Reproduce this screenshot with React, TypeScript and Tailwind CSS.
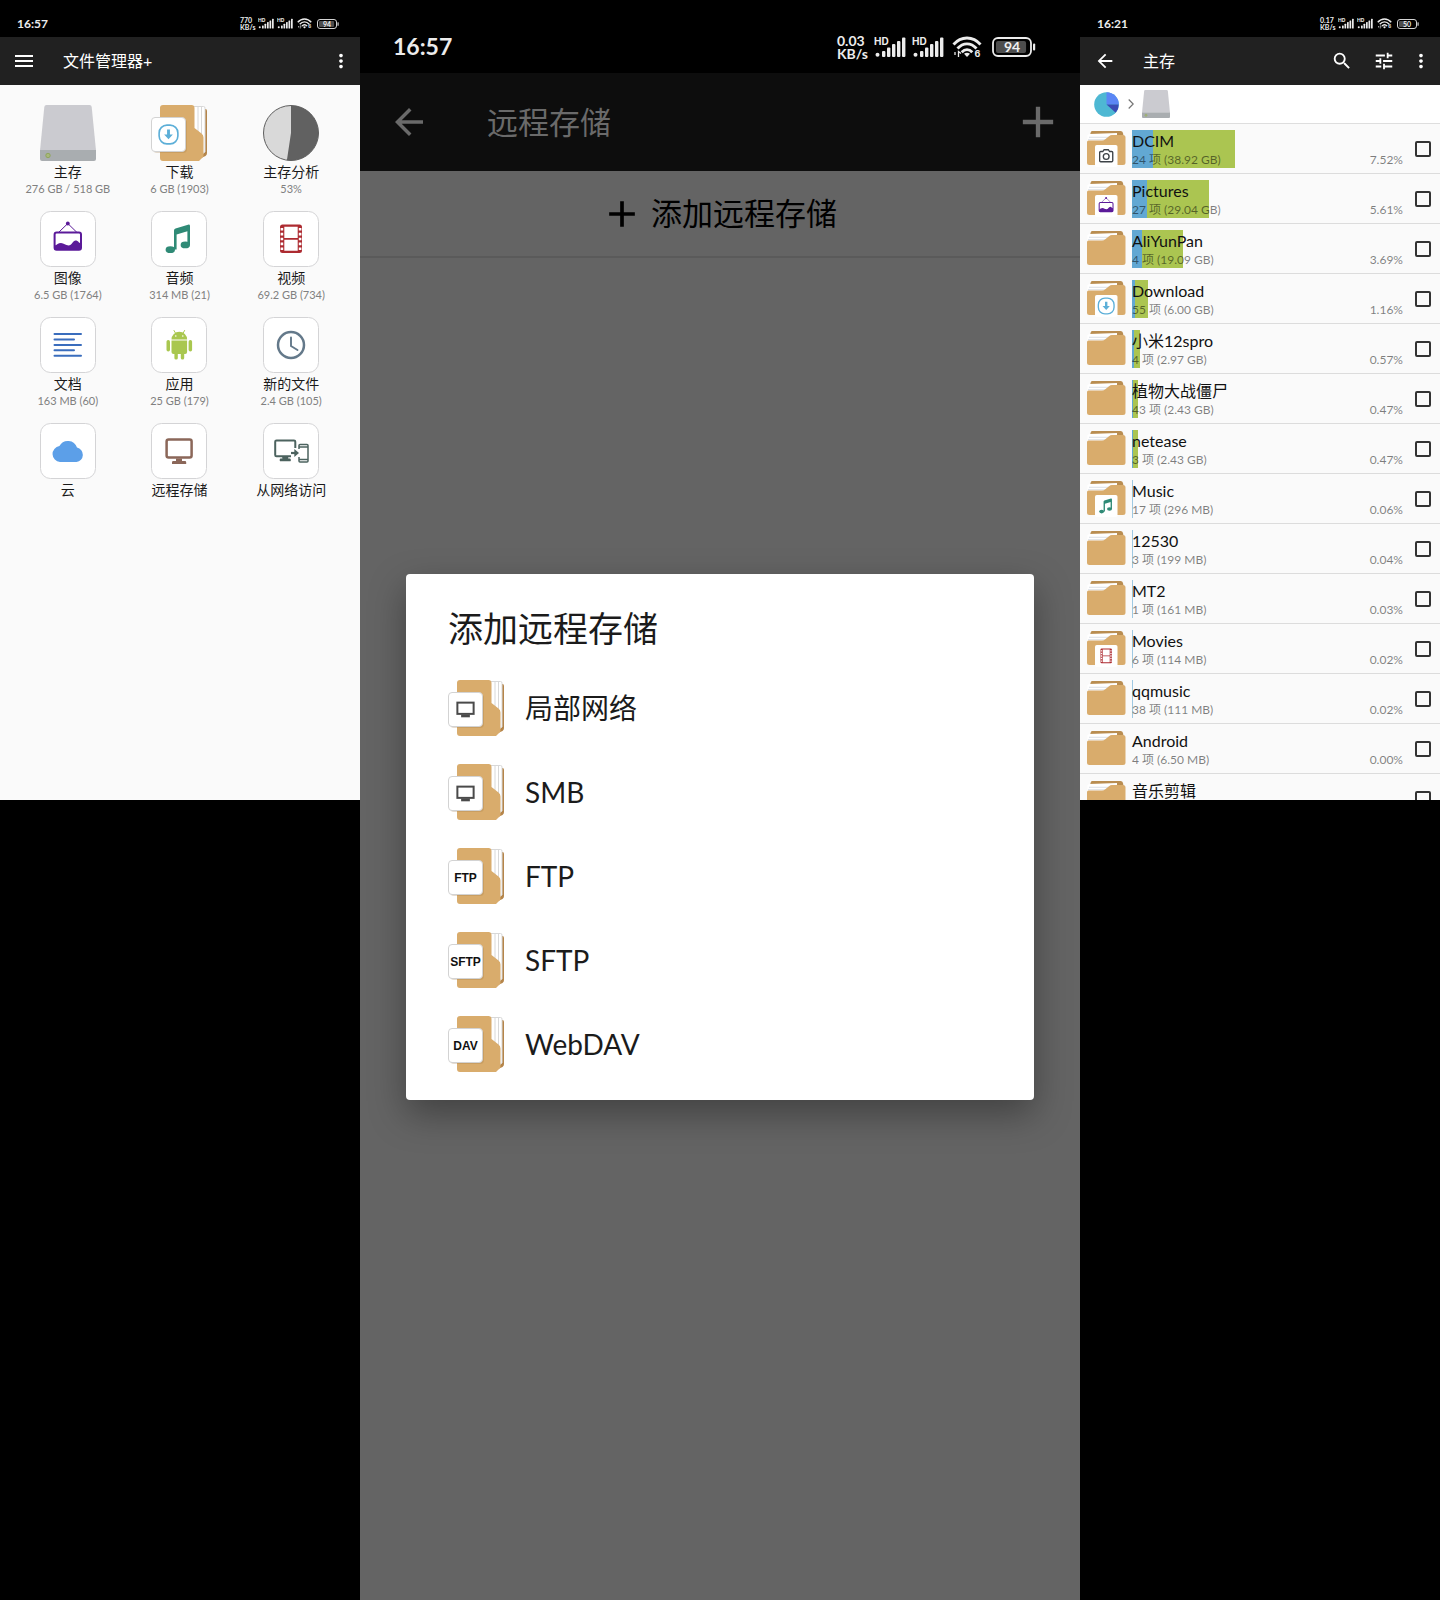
import type { ReactNode } from 'react';
import { MdAdd, MdArrowBack, MdMenu, MdMoreVert, MdSearch, MdTune } from 'react-icons/md';

/* ---------- status bar ---------- */

function Signal({ className }: { className: string }) {
  return (
    <svg viewBox="0 0 32 22" className={className} fill="#ececec" aria-hidden="true">
      <text x="0" y="8.500" fontSize="10" fontWeight="700" fontFamily="Inter, sans-serif">HD</text>
      <circle cx="3.500" cy="18.700" r="2" />
      <rect x="8" y="15" width="3.400" height="6" rx="1" />
      <rect x="13" y="11.500" width="3.400" height="9.500" rx="1" />
      <rect x="18" y="8" width="3.400" height="13" rx="1" />
      <rect x="23" y="5" width="3.400" height="16" rx="1" />
      <rect x="28" y="1.500" width="3.400" height="19.500" rx="1" />
    </svg>
  );
}

function Wifi({ className }: { className: string }) {
  return (
    <svg viewBox="0 0 30 22" className={className} fill="none" stroke="#ececec" strokeWidth="2.800" aria-hidden="true">
      <path d="M1.500 8.500C9-.2 21-.2 28.500 8.500" />
      <path d="M5.500 12.500C11 6.200 19 6.200 24.500 12.500" />
      <path d="M9.700 16.300C13 12.700 17 12.700 20.300 16.300" />
      <path d="M15 21l-3-3.200q3-2.200 6 0z" fill="#ececec" stroke="none" />
      <path d="M3 16v3M6.500 21v-5.500l2.500 2" strokeWidth="1.300" />
      <text x="22.500" y="20.500" fontSize="9" fontWeight="700" fill="#ececec" stroke="none" fontFamily="Inter, sans-serif">6</text>
    </svg>
  );
}

function Battery({ level, className }: { level: number; className: string }) {
  return (
    <svg viewBox="0 0 44 20" className={className} aria-hidden="true">
      <rect x="1" y="1" width="38" height="18" rx="5" fill="none" stroke="#ececec" strokeWidth="1.800" />
      <rect x="4" y="4" width={(32 * level) / 100} height="12" rx="2" fill="#4d4d4d" />
      <rect x="41" y="6.500" width="2.200" height="7" rx="1" fill="#ececec" />
      <text x="20" y="15" fontSize="14" fontWeight="700" textAnchor="middle" fill="#f0f0f0" fontFamily="Lato, sans-serif">{level}</text>
    </svg>
  );
}

function StatusBar({ time, speed, level, large }: { time: string; speed: string; level: number; large?: boolean }) {
  return (
    <div
      className={
        large
          ? 'flex h-[73px] shrink-0 items-center bg-black pt-5 pr-11 pl-[33px] text-[#ececec]'
          : 'flex h-[37px] shrink-0 items-center bg-black pt-2.5 pr-[21px] pl-[17px] text-[#ececec]'
      }
    >
      <time className={large ? 'text-[23px] leading-none font-bold' : 'text-[12px] leading-none font-bold'}>{time}</time>
      <div className="ml-auto flex items-center">
        <div
          className={
            large
              ? 'mr-1.5 w-[31px] text-[14px] leading-[13px] font-bold whitespace-nowrap'
              : 'mr-0.5 w-4 text-[7px] leading-[7px] font-bold whitespace-nowrap'
          }
        >
          <p>{speed}</p>
          <p>KB/s</p>
        </div>
        <Signal className={large ? 'mr-1.5 h-[22px] w-8' : 'mr-[3px] h-[11px] w-4'} />
        <Signal className={large ? 'mr-2 h-[22px] w-8' : 'mr-1 h-[11px] w-4'} />
        <Wifi className={large ? 'mr-2.5 h-[22px] w-[30px]' : 'mr-[5px] h-[11px] w-[15px]'} />
        <Battery level={level} className={large ? 'h-5 w-11' : 'h-2.5 w-[22px]'} />
      </div>
    </div>
  );
}

/* ---------- glyphs, drawn in a 56 unit square ---------- */

const ImageGlyph = () => (
  <g>
    <circle cx="27.800" cy="12.500" r="1.900" fill="#5b1a99" />
    <path d="M18.500 21.500L27.800 12.500L37 21.500" fill="none" stroke="#5b1a99" strokeWidth="1" />
    <rect x="14.600" y="21.500" width="26.400" height="17.200" rx="2" fill="none" stroke="#5b1a99" strokeWidth="2" />
    <path d="M14.600 34.500c2.400-.6 3.500-2.600 6.400-2.600s4.500 2.500 7.600 2.500 4.400-5 7-5 3.200 2.600 5.400 3V38.700H14.600z" fill="#5b1a99" />
  </g>
);

const MusicGlyph = () => (
  <g fill="#2f8a76">
    <path d="M23 19.500q0-1.500 1.500-2.100L37 13.700q2-.5 2 1.300V34h-2.600V20.300L25.600 23.500V38.500H23z" />
    <ellipse cx="19.300" cy="38.700" rx="4.700" ry="3.400" />
    <ellipse cx="34.300" cy="33.900" rx="4.700" ry="3.400" />
  </g>
);

const FilmGlyph = () => (
  <g>
    <path
      fill="#ad2b31"
      fillRule="evenodd"
      d="M19.500 13.500h17q2.500 0 2.500 2.500v23.500q0 2.500-2.500 2.500h-17q-2.500 0-2.500-2.500V16q0-2.500 2.500-2.500zM21.300 15.700v11.300h13.400V15.700zM21.300 28.700v11.100h13.400V28.700z"
    />
    <path d="M18.900 17v22M37.100 17v22" fill="none" stroke="#fff" strokeWidth="2.600" strokeDasharray="2.600 2.250" />
  </g>
);

const DocGlyph = () => (
  <path d="M14.500 17h26.500M14.500 22.400h19.500M14.500 27.900h26.500M14.500 33.300h19.500M14.500 38.700h26.500" stroke="#3a6dbd" strokeWidth="2" strokeLinecap="round" />
);

const AndroidGlyph = () => (
  <g fill="#a9c74f">
    <path d="M20.500 22.500a7.800 7.800 0 0 1 15.600 0z" />
    <path d="M23 13.500l2 3.500M33.600 13.500l-2 3.500" stroke="#a9c74f" strokeWidth="1" strokeLinecap="round" />
    <circle cx="24.800" cy="19" r=".8" fill="#fff" />
    <circle cx="31.800" cy="19" r=".8" fill="#fff" />
    <path d="M20.500 23.500h15.600v11.500q0 2-2 2h-11.600q-2 0-2-2z" />
    <rect x="15.500" y="23" width="3.500" height="11.500" rx="1.700" />
    <rect x="37.600" y="23" width="3.500" height="11.500" rx="1.700" />
    <rect x="23.400" y="34" width="3.400" height="8.500" rx="1.600" />
    <rect x="29.800" y="34" width="3.400" height="8.500" rx="1.600" />
  </g>
);

const ClockGlyph = () => (
  <g fill="none" stroke="#64798a" strokeWidth="2.500">
    <circle cx="28" cy="28" r="13" />
    <path d="M28 20.500V29l6.500 4" strokeWidth="1.900" strokeLinecap="round" />
  </g>
);

const CloudGlyph = () => (
  <path d="M20 39a8 8 0 0 1-.6-15.900A9.600 9.600 0 0 1 37 24.600 7.300 7.300 0 0 1 36.500 39z" fill="#5c9fe8" />
);

const MonitorGlyph = () => (
  <g>
    <rect x="15.600" y="16.400" width="25" height="18.200" rx="2" fill="none" stroke="#8b6759" strokeWidth="2.500" />
    <path d="M25 35.500h6v2.500h3q1.200 0 1.200 1.200v1.800H21v-1.800q0-1.200 1.200-1.200h2.800z" fill="#8b6759" />
  </g>
);

const NetworkGlyph = () => (
  <g fill="none" stroke="#4c635f">
    <path d="M28 33.300H13.500q-1.300 0-1.300-1.300V18.800q0-1.300 1.300-1.300H31q1.300 0 1.300 1.300V25" strokeWidth="2" />
    <path d="M17 38h10.500v-1.600q0-.6-.6-.6H25v-2h-5.500v2h-2q-.5 0-.5.6z" fill="#4c635f" strokeWidth=".500" />
    <path d="M28 30h4" strokeWidth="2.200" />
    <path d="M31.300 26l4.700 4-4.700 4z" fill="#4c635f" stroke="none" />
    <path d="M36 26V22.600q0-1 1-1h7q1 0 1 1v15.300q0 1-1 1h-7q-1 0-1-1V34M36 24h9M36 36.500h9" strokeWidth="1.500" />
  </g>
);

const DownloadGlyph = () => (
  <g>
    <rect x="13" y="13" width="30" height="30" rx="12.500" fill="none" stroke="#5cafd8" strokeWidth="2.600" />
    <path d="M25.700 20h4.600v8h4.700L28 35.500 21 28h4.700z" fill="#5cafd8" />
  </g>
);

const CameraGlyph = () => (
  <g fill="none" stroke="#3d4247" strokeWidth="2.600">
    <path d="M17.500 19.500h4l2.500-3.500h8l2.500 3.500h4q2 0 2 2V37q0 2-2 2h-21q-2 0-2-2V21.500q0-2 2-2z" />
    <circle cx="28" cy="29" r="5.500" />
  </g>
);

const ScreenGlyph = () => (
  <g>
    <rect x="15" y="17" width="26" height="18" fill="none" stroke="#4a4a4a" strokeWidth="3.200" />
    <path d="M21 36h14v4.500H21z" fill="#4a4a4a" />
  </g>
);

/* ---------- icons ---------- */

function Drive({ className }: { className: string }) {
  return (
    <svg viewBox="0 0 56 56" className={className} aria-hidden="true">
      <path d="M6.500 0h43q2 0 2.200 2L56 45.500H0L4.300 2Q4.500 0 6.500 0z" fill="#cbcbd0" />
      <path d="M0 45h56v9q0 2-2 2H2q-2 0-2-2z" fill="#a9adb0" />
      <circle cx="8" cy="50.500" r="2.200" fill="#a8b87a" stroke="#8fa65e" strokeWidth="1" />
    </svg>
  );
}

/* Upright folder with a white badge on its left side. */
function SideFolder({ children, label }: { children?: ReactNode; label?: string }) {
  return (
    <svg viewBox="0 0 56 56" className="size-14 shrink-0" aria-hidden="true">
      <path d="M44 4h10.500q1.500 0 1.500 2v42q0 2-1.500 3L48 54z" fill="#b5854a" />
      <path d="M42 1.500h10.500q1.500 0 1.500 1.500v44l-4 3h-8z" fill="#fff" stroke="#d8d8d8" strokeWidth="1" />
      <path d="M50.500 2v46M47 2v30" stroke="#d8d8d8" strokeWidth="1" />
      <path d="M12 0h28.500q3 0 3 3v20l7 5.500q2 1.500 2 4V51.500L48 56H12q-3 0-3-3V3q0-3 3-3z" fill="#d9ac6c" />
      <rect x="2" y="14" width="34" height="34" rx="4" fill="#9c7440" opacity=".25" />
      <rect x=".5" y="12.500" width="34" height="34" rx="3.500" fill="#fff" stroke="#d3d3d3" strokeWidth="1" />
      {label ? (
        <text x="17.500" y="34" fontSize="12" fontWeight="700" textAnchor="middle" fill="#111" fontFamily="Liberation Sans, Arial, sans-serif">{label}</text>
      ) : (
        <svg x="0" y="12" width="35" height="35" viewBox="0 0 56 56">{children}</svg>
      )}
    </svg>
  );
}

/* Landscape folder used by the file list. */
function ListFolder({ children }: { children?: ReactNode }) {
  return (
    <svg viewBox="0 0 39 36" className="h-9 w-[39px] shrink-0" aria-hidden="true">
      <path d="M5 0h28.500q2 0 2.500 2l.8 5H2.500L3.500 2Q4 0 5 0z" fill="#b98d51" />
      <path d="M.5 4.500Q1 3 2.500 2.900L30 2v9H.5z" fill="#fff" />
      <path d="M2 6.300h22M1 8.700h20" stroke="#ccd3dc" strokeWidth=".700" />
      <path d="M0 11q0-1.500 1.500-1.500H15q2 0 3.300-1.200L22 5.200Q23.300 4 25 4h11q2.500 0 2.500 2.500V31.500q0 2.500-2.500 2.500H2.500Q0 34 0 31.500z" fill="#d9ac6c" />
      {children && (
        <>
          <rect x="8" y="14" width="22.500" height="22" rx="1.800" fill="#fff" />
          <svg x="8.200" y="14" width="22" height="22" viewBox="7 7 42 42">{children}</svg>
        </>
      )}
    </svg>
  );
}

function Pie() {
  return (
    <svg viewBox="0 0 56 56" className="size-14" aria-hidden="true">
      <circle cx="28" cy="28" r="27.500" fill="#d9d9d9" />
      <path d="M28 28V.5A27.500 27.500 0 1 1 23.900 55.200z" fill="#616161" />
      <circle cx="28" cy="28" r="27.500" fill="none" stroke="#5f5f5f" strokeWidth="1" />
    </svg>
  );
}

function Tile({ children }: { children: ReactNode }) {
  return (
    <svg viewBox="0 0 56 56" className="size-14" aria-hidden="true">
      <rect x=".5" y=".5" width="55" height="55" rx="10" fill="#fff" stroke="#d4d4d6" strokeWidth="1" />
      {children}
    </svg>
  );
}

/* ---------- home screen ---------- */

const shortcuts: { name: string; detail?: string; icon: ReactNode }[] = [
  { name: '主存', detail: '276 GB / 518 GB', icon: <Drive className="size-14" /> },
  { name: '下载', detail: '6 GB (1903)', icon: <SideFolder><DownloadGlyph /></SideFolder> },
  { name: '主存分析', detail: '53%', icon: <Pie /> },
  { name: '图像', detail: '6.5 GB (1764)', icon: <Tile><ImageGlyph /></Tile> },
  { name: '音频', detail: '314 MB (21)', icon: <Tile><MusicGlyph /></Tile> },
  { name: '视频', detail: '69.2 GB (734)', icon: <Tile><FilmGlyph /></Tile> },
  { name: '文档', detail: '163 MB (60)', icon: <Tile><DocGlyph /></Tile> },
  { name: '应用', detail: '25 GB (179)', icon: <Tile><AndroidGlyph /></Tile> },
  { name: '新的文件', detail: '2.4 GB (105)', icon: <Tile><ClockGlyph /></Tile> },
  { name: '云', icon: <Tile><CloudGlyph /></Tile> },
  { name: '远程存储', icon: <Tile><MonitorGlyph /></Tile> },
  { name: '从网络访问', icon: <Tile><NetworkGlyph /></Tile> },
];

function HomeScreen() {
  return (
    <section className="flex aspect-[9/20] flex-col overflow-hidden bg-[#fafafa]">
      <StatusBar time="16:57" speed="770" level={94} />
      <header className="flex h-12 shrink-0 items-center bg-[#212121] pr-2 pl-3 text-white">
        <button type="button" aria-label="菜单"><MdMenu size={24} /></button>
        <h1 className="ml-[27px] text-[16px]">文件管理器+</h1>
        <button type="button" aria-label="更多" className="ml-auto"><MdMoreVert size={22} /></button>
      </header>
      <div className="grid grid-cols-3 gap-y-2 pt-5 pr-[13px] pl-3">
        {shortcuts.map((s) => (
          <button key={s.name} type="button" className="flex h-[98px] flex-col items-center">
            {s.icon}
            <span className="mt-px text-[14px] leading-5 text-[#1a1a1a]">{s.name}</span>
            {s.detail && <span className="text-[11px] leading-[13px] whitespace-nowrap text-[#808080]">{s.detail}</span>}
          </button>
        ))}
      </div>
    </section>
  );
}

/* ---------- remote storage screen ---------- */

const remotes: { name: string; icon: ReactNode }[] = [
  { name: '局部网络', icon: <SideFolder><ScreenGlyph /></SideFolder> },
  { name: 'SMB', icon: <SideFolder><ScreenGlyph /></SideFolder> },
  { name: 'FTP', icon: <SideFolder label="FTP" /> },
  { name: 'SFTP', icon: <SideFolder label="SFTP" /> },
  { name: 'WebDAV', icon: <SideFolder label="DAV" /> },
];

function RemoteScreen() {
  return (
    <section className="flex aspect-[9/20] flex-col overflow-hidden bg-[#646464]">
      <StatusBar time="16:57" speed="0.03" level={94} large />
      <div className="relative flex-1">
        <header className="flex h-[98px] items-center bg-[#0d0d0d] pr-4 pl-7 text-[#6a6a6a]">
          <button type="button" aria-label="返回"><MdArrowBack size={42} /></button>
          <h1 className="ml-[57px] text-[31px] leading-none">远程存储</h1>
          <button type="button" aria-label="添加" className="ml-auto"><MdAdd size={52} /></button>
        </header>
        <button type="button" className="flex h-[87px] w-full items-center justify-center gap-[7px] border-b-2 border-[#5a5a5a] pr-[3px] text-black">
          <MdAdd size={44} />
          <span className="text-[31px] leading-none">添加远程存储</span>
        </button>
        <div className="absolute inset-0 flex items-center justify-center px-[46px]">
          <div
            role="dialog"
            aria-labelledby="dialog-title"
            className="w-full rounded-[4px] bg-white px-[42px] pt-8 pb-3.5 text-[#1b1b1b] shadow-[0_14px_36px_rgba(0,0,0,0.35)]"
          >
            <h2 id="dialog-title" className="text-[35px] leading-[44px]">添加远程存储</h2>
            <ul className="mt-4">
              {remotes.map((r) => (
                <li key={r.name}>
                  <button type="button" className="flex h-[84px] w-full items-center gap-[21px] text-[28px]">
                    {r.icon}
                    <span>{r.name}</span>
                  </button>
                </li>
              ))}
            </ul>
          </div>
        </div>
      </div>
    </section>
  );
}

/* ---------- storage screen ---------- */

const files: { name: string; detail?: string; percent?: string; bar: number; glyph?: ReactNode }[] = [
  { name: 'DCIM', detail: '24 项 (38.92 GB)', percent: '7.52%', bar: 103, glyph: <CameraGlyph /> },
  { name: 'Pictures', detail: '27 项 (29.04 GB)', percent: '5.61%', bar: 77, glyph: <ImageGlyph /> },
  { name: 'AliYunPan', detail: '4 项 (19.09 GB)', percent: '3.69%', bar: 51 },
  { name: 'Download', detail: '55 项 (6.00 GB)', percent: '1.16%', bar: 16, glyph: <DownloadGlyph /> },
  { name: '小米12spro', detail: '4 项 (2.97 GB)', percent: '0.57%', bar: 8 },
  { name: '植物大战僵尸', detail: '43 项 (2.43 GB)', percent: '0.47%', bar: 6 },
  { name: 'netease', detail: '3 项 (2.43 GB)', percent: '0.47%', bar: 6 },
  { name: 'Music', detail: '17 项 (296 MB)', percent: '0.06%', bar: 1, glyph: <MusicGlyph /> },
  { name: '12530', detail: '3 项 (199 MB)', percent: '0.04%', bar: 1 },
  { name: 'MT2', detail: '1 项 (161 MB)', percent: '0.03%', bar: 1 },
  { name: 'Movies', detail: '6 项 (114 MB)', percent: '0.02%', bar: 1, glyph: <FilmGlyph /> },
  { name: 'qqmusic', detail: '38 项 (111 MB)', percent: '0.02%', bar: 1 },
  { name: 'Android', detail: '4 项 (6.50 MB)', percent: '0.00%', bar: 0 },
  { name: '音乐剪辑', bar: 0 },
];

function StorageScreen() {
  return (
    <section className="flex aspect-[9/20] flex-col overflow-hidden bg-[#fafafa]">
      <StatusBar time="16:21" speed="0.17" level={50} />
      <header className="flex h-12 shrink-0 items-center bg-[#212121] pr-2 pl-3.5 text-white">
        <button type="button" aria-label="返回"><MdArrowBack size={22} /></button>
        <h1 className="ml-[27px] text-[16px]">主存</h1>
        <button type="button" aria-label="搜索" className="ml-auto"><MdSearch size={22} /></button>
        <button type="button" aria-label="筛选" className="ml-5"><MdTune size={22} /></button>
        <button type="button" aria-label="更多" className="ml-[15px]"><MdMoreVert size={22} /></button>
      </header>
      <nav className="flex h-[39px] shrink-0 items-center border-b border-[#dedede] bg-white pl-3.5">
        <button type="button" aria-label="存储分析">
          <svg viewBox="0 0 25 25" className="size-[25px]" aria-hidden="true">
            <circle cx="12.500" cy="12.500" r="12.300" fill="#4eb8d3" />
            <path d="M12.500 12.500V.2A12.300 12.300 0 0 1 24.800 12.500z" fill="#5b86f5" />
            <path d="M12.500 12.500H24.800A12.300 12.300 0 0 1 21.700 20.700z" fill="#3a4cb5" />
          </svg>
        </button>
        <svg viewBox="0 0 6 10" className="mr-2 ml-[9px] h-2.5 w-1.5" fill="none" stroke="#757575" strokeWidth="1.200" aria-hidden="true">
          <path d="M.7.500L5.200 5 .7 9.500" />
        </svg>
        <button type="button" aria-label="主存"><Drive className="size-7" /></button>
      </nav>
      <ul>
        {files.map((f) => (
          <li key={f.name} className="flex h-[50px] items-center border-b border-[#dcdcdc] pr-[9px] pl-[7px]">
            <ListFolder>{f.glyph}</ListFolder>
            <label htmlFor={`pick-${f.name}`} className="relative ml-1.5 flex h-[38px] flex-1 flex-col">
              {f.bar > 0 && (
                <span className="absolute inset-y-0 left-0 flex bg-[#abc551]" style={{ width: f.bar, opacity: f.bar > 1 ? 1 : 0.6 }}>
                  <span className="w-1/5 bg-[#62a8d3]" />
                </span>
              )}
              <span className="relative text-[16px] leading-[22px] text-[#111]">{f.name}</span>
              {f.detail && (
                <span className="relative flex justify-between text-[12px] leading-4 text-black/50">
                  <span>{f.detail}</span>
                  <span>{f.percent}</span>
                </span>
              )}
            </label>
            <input
              id={`pick-${f.name}`}
              type="checkbox"
              className="ml-3 size-4 shrink-0 appearance-none rounded-[2px] border-2 border-[#333] checked:bg-[#333]"
            />
          </li>
        ))}
      </ul>
    </section>
  );
}

export default function App() {
  return (
    <main
      lang="zh-CN"
      className="grid min-h-screen grid-cols-[1fr_2fr_1fr] items-start bg-black font-[Lato,'Noto_Sans_CJK_SC',sans-serif]"
    >
      <HomeScreen />
      <RemoteScreen />
      <StorageScreen />
    </main>
  );
}
